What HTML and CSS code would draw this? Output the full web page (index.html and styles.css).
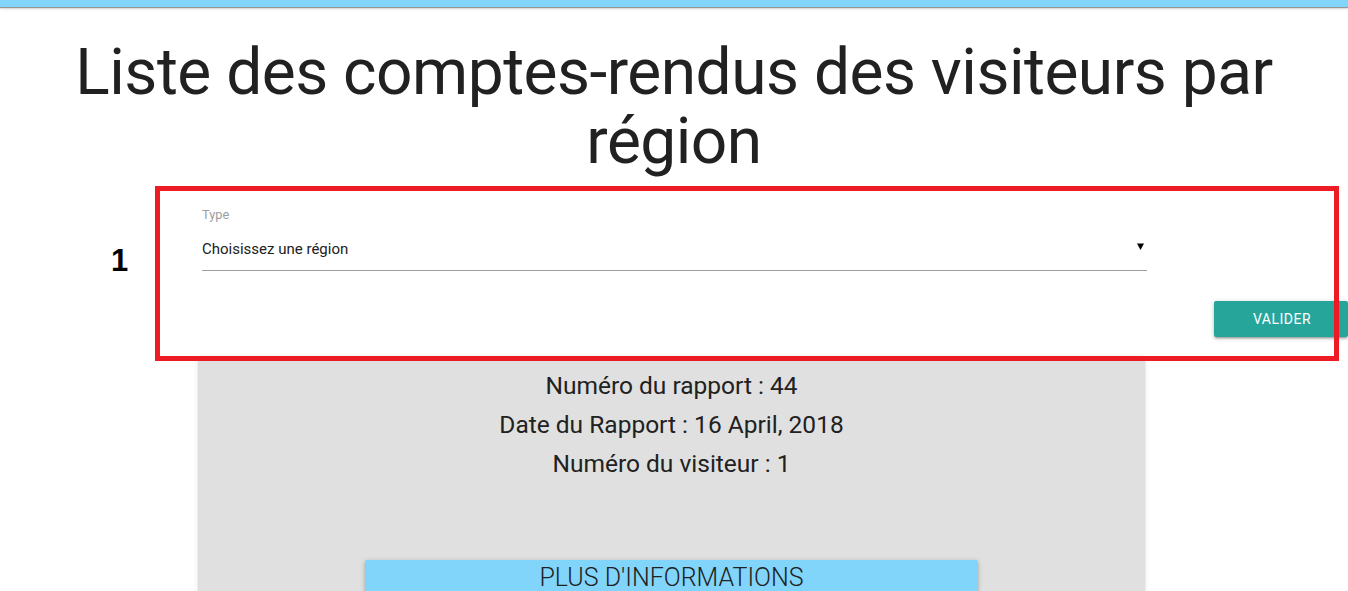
FILE: index.html
```html
<!DOCTYPE html>
<html lang="fr">
<head>
<meta charset="utf-8">
<title>Comptes-rendus</title>
<link rel="stylesheet" href="styles.css">
</head>
<body>
<header class="topbar"></header>
<h1 class="title">Liste des comptes-rendus des visiteurs par région</h1>
<section class="filter">
  <div class="field">
    <label class="field-label">Type</label>
    <div class="select">
      <span class="select-value">Choisissez une région</span>
      <svg class="caret" width="7" height="7" viewBox="0 0 7 7"><path d="M0 0.5 H7 L3.5 7 Z" fill="#000"/></svg>
    </div>
  </div>
  <div class="actions">
    <button class="btn-validate" type="button">Valider</button>
  </div>
</section>
<main class="card">
  <p class="card-line">Numéro du rapport : 44</p>
  <p class="card-line">Date du Rapport : 16 April, 2018</p>
  <p class="card-line">Numéro du visiteur : 1</p>
  <div class="card-action">
    <button class="btn-more" type="button">Plus d'informations</button>
  </div>
</main>
<div class="annot-box"></div>
<div class="annot-num">1</div>
</body>
</html>
```
FILE: styles.css
```css
html, body {
  margin: 0;
  padding: 0;
  overflow: hidden;
  background: #fff;
}
body {
  font-family: Roboto, "Liberation Sans", sans-serif;
  color: rgba(0, 0, 0, 0.87);
  position: relative;
  height: 591px;
}
.topbar {
  height: 7px;
  background: #81d4fa;
  box-shadow: 0 1px 1px rgba(0, 0, 0, 0.35), 0 2px 3px rgba(0, 0, 0, 0.12);
}
.title {
  margin: 32px 0 0;
  font-size: 64px;
  letter-spacing: -0.5px;
  line-height: 68.5px;
  font-weight: 400;
  text-align: center;
  color: #212121;
}
.filter {
  padding-top: 31px;
}
.field {
  margin-left: 202px;
  width: 945px;
}
.field-label {
  display: block;
  font-size: 12.8px;
  line-height: 16px;
  color: #9e9e9e;
}
.select {
  display: flex;
  align-items: center;
  height: 48px;
  box-sizing: border-box;
  border-bottom: 1px solid #9e9e9e;
}
.select-value {
  flex: 1;
  font-size: 15px;
  line-height: 48px;
  color: #212121;
  position: relative;
  top: 2px;
}
.caret {
  margin-right: 3px;
  margin-top: -1px;
}
.actions {
  display: flex;
  justify-content: flex-end;
  margin-top: 30px;
}
.btn-validate {
  width: 134px;
  height: 36px;
  border: none;
  border-radius: 2px;
  background: #26a69a;
  color: #fff;
  font-family: Roboto, "Liberation Sans", sans-serif;
  font-size: 14px;
  letter-spacing: 0.5px;
  text-transform: uppercase;
  padding: 0 0 0 2px;
  box-shadow: 0 2px 2px 0 rgba(0, 0, 0, 0.14), 0 3px 1px -2px rgba(0, 0, 0, 0.12), 0 1px 5px 0 rgba(0, 0, 0, 0.2);
}
.card {
  margin: 20px 0 0 199px;
  width: 945px;
  height: 300px;
  background: #e0e0e0;
  padding-top: 9px;
  box-sizing: border-box;
  box-shadow: 0 2px 2px 0 rgba(0, 0, 0, 0.14), 0 3px 1px -2px rgba(0, 0, 0, 0.12), 0 1px 5px 0 rgba(0, 0, 0, 0.2);
}
.card-line {
  margin: 0;
  font-size: 24.5px;
  line-height: 39px;
  text-align: center;
  color: #212121;
}
.card-action {
  display: flex;
  justify-content: center;
  margin-top: 77px;
}
.btn-more {
  width: 613px;
  height: 40px;
  border: none;
  border-radius: 2px;
  background: #81d4fa;
  color: #212121;
  font-family: Roboto, "Liberation Sans", sans-serif;
  font-weight: 300;
  font-size: 25px;
  line-height: 36px;
  text-transform: uppercase;
  padding: 0 0 4px;
  box-shadow: 0 2px 2px 0 rgba(0, 0, 0, 0.14), 0 1px 5px 0 rgba(0, 0, 0, 0.2);
}
.annot-box {
  position: absolute;
  left: 155px;
  top: 186px;
  width: 1184px;
  height: 175px;
  box-sizing: border-box;
  border: 5px solid #ed1c24;
}
.annot-num {
  position: absolute;
  left: 111px;
  top: 244px;
  font-family: "Liberation Sans", Arial, sans-serif;
  font-weight: 700;
  font-size: 31px;
  line-height: 34px;
  color: #000;
}
```
